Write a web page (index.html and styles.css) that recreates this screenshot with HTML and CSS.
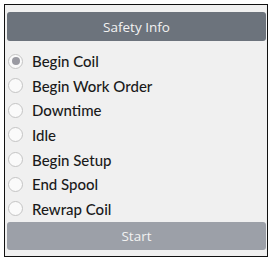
FILE: index.html
```html
<!DOCTYPE html>
<html lang="en">
<head>
    <meta charset="UTF-8" />
    <title>Start Activity</title>
    <link rel="stylesheet" href="styles.css">
</head>
<body>

<div class="panel">
    <button class="btn btn-info">Safety Info</button>

    <ul class="options">
        <li><label><input type="radio" name="activity" checked><span class="dot"></span>Begin Coil</label></li>
        <li><label><input type="radio" name="activity"><span class="dot"></span>Begin Work Order</label></li>
        <li><label><input type="radio" name="activity"><span class="dot"></span>Downtime</label></li>
        <li><label><input type="radio" name="activity"><span class="dot"></span>Idle</label></li>
        <li><label><input type="radio" name="activity"><span class="dot"></span>Begin Setup</label></li>
        <li><label><input type="radio" name="activity"><span class="dot"></span>End Spool</label></li>
        <li><label><input type="radio" name="activity"><span class="dot"></span>Rewrap Coil</label></li>
    </ul>

    <button class="btn btn-start">Start</button>
</div>

</body>
</html>
```

FILE: styles.css
```css
body {
    margin: 0;
    background: #fff;
    font-family: 'Open Sans', 'Noto Sans', sans-serif;
}

.panel {
    margin: 4px 0 0 4px;
    width: 259px;
    height: 238px;
    padding: 7px 1px 6px 2px;
    border: 1px solid #111;
    background: #f0f0f0;
    display: flex;
    flex-direction: column;
}

.btn {
    border: none;
    border-radius: 3px;
    color: #f2f2f2;
    font-family: inherit;
    font-size: 13.5px;
    padding: 0;
    width: 100%;
}

.btn-info {
    height: 29px;
    background: #6c737c;
}

.btn-start {
    height: 28px;
    background: #9ca0a8;
}

.options {
    list-style: none;
    margin: 8px 0 0;
    padding: 0 0 1px;
    flex: 1;
    display: flex;
    flex-direction: column;
    justify-content: space-around;
}

.options label {
    display: flex;
    align-items: center;
    font-family: Lato, 'Open Sans', sans-serif;
    font-size: 15px;
    font-weight: 500;
    color: #1a1a1a;
    padding-left: 1px;
}

.options input {
    display: none;
}

.dot {
    flex-shrink: 0;
    width: 13px;
    height: 13px;
    border: 1px solid #c4c4c4;
    border-radius: 50%;
    background: #fafafa;
    margin-right: 9px;
    position: relative;
}

.options input:checked + .dot::after {
    content: "";
    position: absolute;
    top: 2.5px;
    left: 2.5px;
    width: 8px;
    height: 8px;
    border-radius: 50%;
    background: #9a9aa2;
}
```
